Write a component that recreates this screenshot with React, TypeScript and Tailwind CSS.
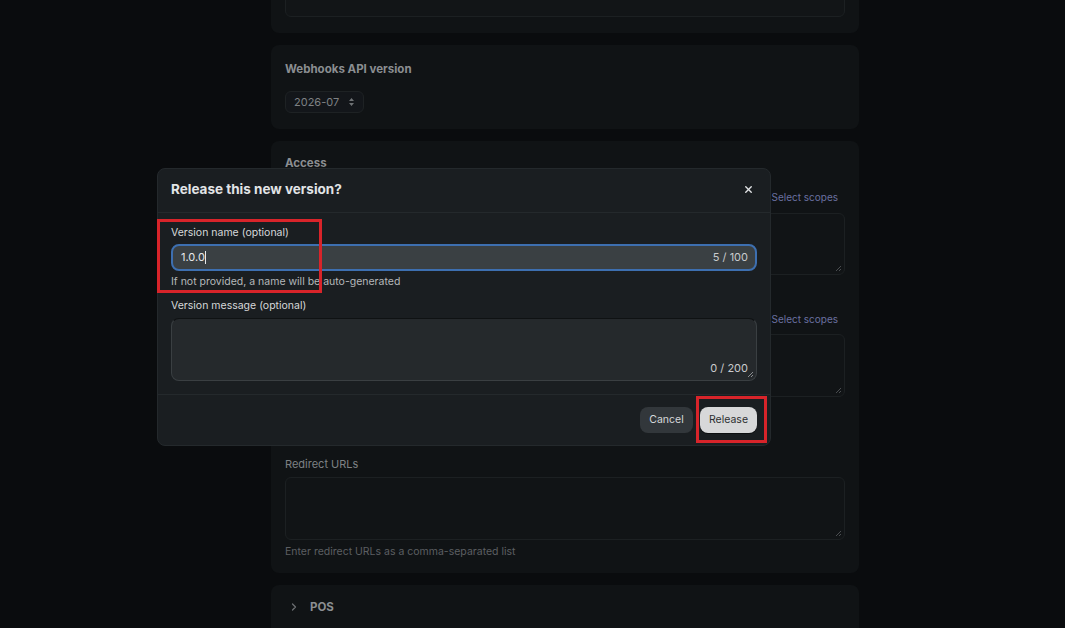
import { ChevronRight, X } from "lucide-react";

export default function App() {
  return (
    <div className="relative w-[1065px] h-[628px] overflow-hidden bg-[#0a0c0e] font-['Inter',sans-serif]">
      <PaginaFondo />
      <ModalRelease />
      {/* anotaciones rojas */}
      <div className="absolute left-[157px] top-[219px] w-[165px] h-[74px] border-[3px] border-[#d8242a]" />
      <div className="absolute left-[696px] top-[396px] w-[71px] h-[47px] border-[3px] border-[#d8242a]" />
    </div>
  );
}

function PaginaFondo() {
  return (
    <div className="pl-[271px] w-[859px] flex flex-col gap-3 -mt-[47px]">
      <div className="bg-[#101315] rounded-lg px-[14px] pt-[14px] pb-[16px]">
        <div className="h-[50px] rounded-md border border-[#1c2022] bg-[#121517]" />
      </div>

      <div className="bg-[#101315] rounded-lg px-[14px] pt-[16px] pb-[16px]">
        <p className="text-[11.5px] font-bold text-[#8b8e91] leading-[16px]">
          Webhooks API version
        </p>
        <div className="mt-[14px] w-[79px] h-[22px] rounded-md border border-[#1e2224] bg-[#13161a] flex items-center justify-between px-2">
          <span className="text-[11px] text-[#7e8184]">2026-07</span>
          <svg width="7" height="10" viewBox="0 0 7 10">
            <path d="M3.5 1 L6 4 H1 Z M3.5 9 L6 6 H1 Z" fill="#6f7275" />
          </svg>
        </div>
      </div>

      <div className="bg-[#101315] rounded-lg px-[14px] pt-[14px] pb-[13px]">
        <p className="text-[11.5px] font-bold text-[#8b8e91] leading-[16px]">Access</p>
        <div className="mt-[19px] flex justify-end pr-[7px]">
          <span className="text-[10px] text-[#6a70a0]">Select scopes</span>
        </div>
        <TextareaFondo className="mt-[8px] h-[62px]" />
        <p className="mt-[4px] text-[10.5px] text-[#5c5f62]">
          Enter scopes as a comma-separated list
        </p>
        <div className="mt-[17px] flex justify-end pr-[7px]">
          <span className="text-[10px] text-[#6a70a0]">Select scopes</span>
        </div>
        <TextareaFondo className="mt-[7px] h-[63px]" />
        <div className="h-[59px]" />
        <p className="text-[11px] text-[#7e8184] leading-[16px]">Redirect URLs</p>
        <TextareaFondo className="mt-[5px] h-[63px]" />
        <p className="mt-[4px] text-[10.5px] text-[#5c5f62]">
          Enter redirect URLs as a comma-separated list
        </p>
      </div>

      <div className="bg-[#101315] rounded-lg px-[14px] h-[60px] pt-[14px]">
        <div className="flex items-center gap-[10px] pl-[3px]">
          <ChevronRight className="w-3 h-3 text-[#6c6f72]" strokeWidth={2.5} />
          <span className="text-[11.5px] font-bold text-[#8b8e91]">POS</span>
        </div>
      </div>
    </div>
  );
}

function TextareaFondo({ className }: { className: string }) {
  return (
    <div
      className={`relative rounded-md border border-[#1c2022] bg-[#111416] ${className}`}
    >
      <svg className="absolute right-[2px] bottom-[2px]" width="7" height="7" viewBox="0 0 7 7">
        <path d="M6 1 L1 6 M6 4 L4 6" stroke="#4a4d50" strokeWidth="1" />
      </svg>
    </div>
  );
}

function ModalRelease() {
  return (
    <div className="absolute left-[157px] top-[168px] w-[614px] h-[278px] rounded-lg bg-[#1a1e21] border border-[#24292c] flex flex-col">
      <div className="h-[44px] flex items-start justify-between pl-[13px] pr-[16px] pt-[10px] border-b border-[#24292c]">
        <h2 className="text-[13.5px] font-bold text-[#e2e4e6] leading-[20px]">
          Release this new version?
        </h2>
        <X className="w-[11px] h-[11px] text-[#e2e4e6] mt-[5px]" strokeWidth={3} />
      </div>

      <div className="px-[13px] pt-[12px] pb-[13px] border-b border-[#24292c]">
        <label className="block text-[10.5px] text-[#d6d8da] leading-[16px]">
          Version name (optional)
        </label>
        <div className="mt-[3px] h-[27px] rounded-lg border-2 border-[#3d6fb0] bg-[#3a4043] flex items-center justify-between pl-[8px] pr-[7px]">
          <span className="text-[11px] text-[#e6e8ea] flex items-center">
            1.0.0<span className="inline-block w-px h-[13px] bg-[#e6e8ea]" />
          </span>
          <span className="text-[11px] text-[#c9cbcd]">5 / 100</span>
        </div>
        <p className="mt-[4px] text-[10.5px] text-[#b5b8ba] leading-[14px]">
          If not provided, a name will be auto-generated
        </p>
        <label className="block mt-[9px] text-[10.5px] text-[#d6d8da] leading-[16px]">
          Version message (optional)
        </label>
        <div className="relative mt-[4px] h-[63px] rounded-lg border border-[#3a3f42] border-t-[#0f1213] bg-[#25292c]">
          <span className="absolute right-[8px] bottom-[4px] text-[11px] text-[#c9cbcd]">
            0 / 200
          </span>
          <svg className="absolute right-[2px] bottom-[2px]" width="7" height="7" viewBox="0 0 7 7">
            <path d="M6 1 L1 6 M6 4 L4 6" stroke="#8a8d90" strokeWidth="1" />
          </svg>
        </div>
      </div>

      <div className="flex-1 flex items-center justify-end gap-[7px] px-[13px]">
        <button className="h-[26px] w-[53px] rounded-lg bg-[#32373b] text-[10.5px] text-[#d6d8da]">
          Cancel
        </button>
        <button className="h-[26px] w-[57px] rounded-lg bg-[#d7d8d9] text-[10.5px] text-[#2b2e30] shadow-[0_1px_0_rgba(0,0,0,0.5)]">
          Release
        </button>
      </div>
    </div>
  );
}
